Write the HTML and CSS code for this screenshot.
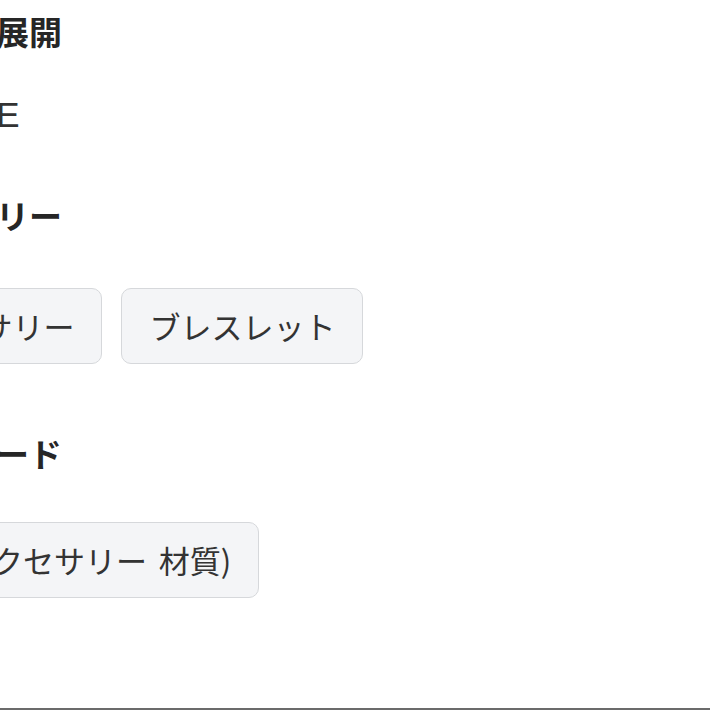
FILE: index.html
```html
<!DOCTYPE html>
<html lang="ja">
<head>
<meta charset="utf-8">
<link rel="stylesheet" href="styles.css">
</head>
<body>
<main class="page">
  <section class="block block-brand">
    <h2 class="block-title">国内外店舗展開</h2>
    <p class="block-text">EC ONLINE</p>
  </section>
  <section class="block block-category">
    <h2 class="block-title">商品カテゴリー</h2>
    <div class="tags">
      <span class="tag">和アクセサリー</span>
      <span class="tag">ブレスレット</span>
    </div>
  </section>
  <section class="block block-keyword">
    <h2 class="block-title">検索キーワード</h2>
    <div class="tags">
      <span class="tag">レザー(アクセサリー 材質)</span>
    </div>
  </section>
</main>
<footer class="page-foot"></footer>
</body>
</html>
```
FILE: styles.css
```css
html, body {
  margin: 0;
  padding: 0;
  background: #ffffff;
  overflow: hidden;
}
body {
  width: 710px;
  height: 710px;
  display: flex;
  flex-direction: column;
  font-family: "Noto Sans CJK JP", "Liberation Sans", sans-serif;
  color: #333333;
}
.page {
  flex: 1;
  margin-left: -169px;
  padding-top: 7px;
}
.block-title {
  margin: 0;
  font-size: 33px;
  line-height: 48px;
  font-weight: 700;
  color: #262626;
  white-space: nowrap;
}
.block-text {
  margin: 36px 0 0;
  font-family: "Liberation Sans", "Noto Sans CJK JP", sans-serif;
  font-size: 35px;
  line-height: 48px;
  color: #333333;
  white-space: nowrap;
}
.block-category {
  margin-top: 52px;
}
.block-category .tags {
  margin-top: 49px;
}
.block-keyword {
  margin-top: 65px;
}
.block-keyword .tags {
  margin-top: 45px;
}
.tags {
  display: flex;
  gap: 19px;
  white-space: nowrap;
}
.tag {
  display: inline-block;
  padding: 14px 27px;
  font-size: 31px;
  line-height: 46px;
  word-spacing: 5px;
  color: #333333;
  background: #f4f5f7;
  border: 1px solid #d6d8db;
  border-radius: 10px;
}
.page-foot {
  height: 2px;
  background: #6b6b6b;
}
```
